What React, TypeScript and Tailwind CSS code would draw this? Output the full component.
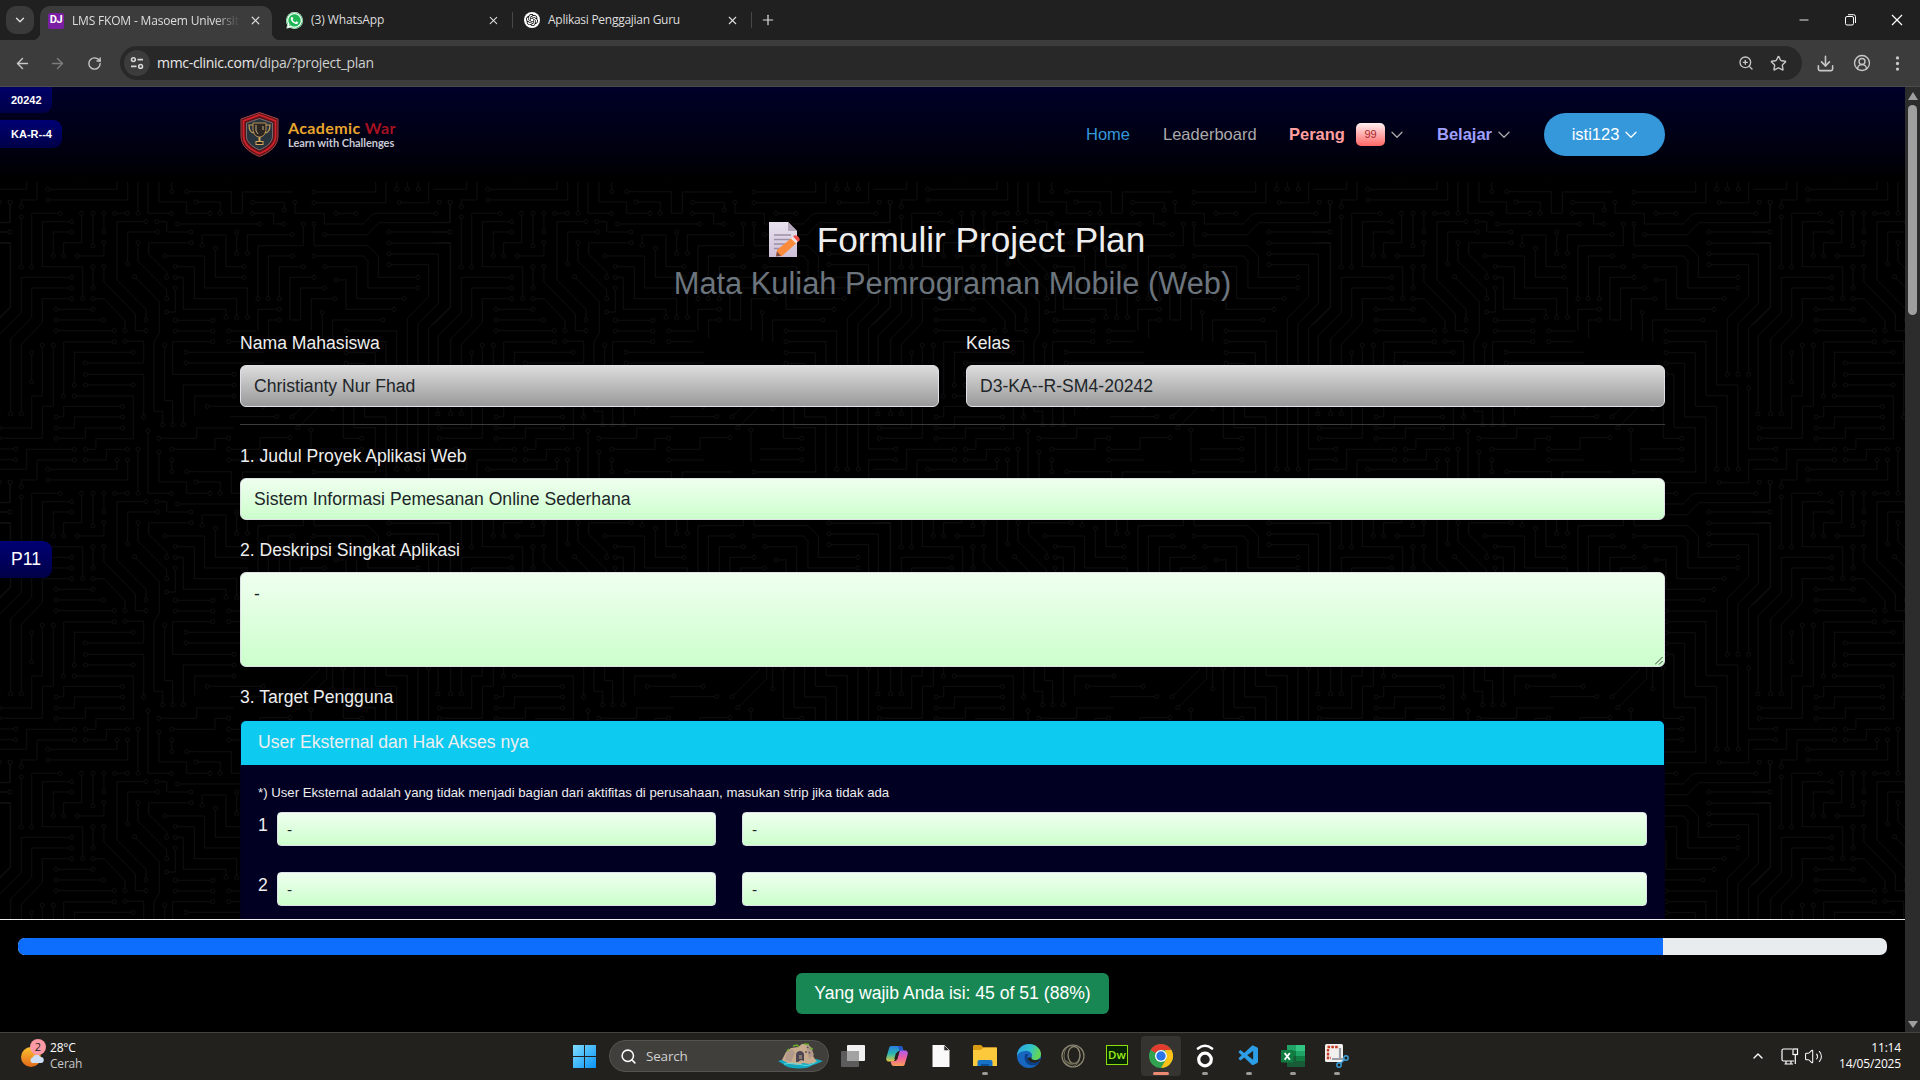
import React from "react";
import {
  ArrowLeft, ArrowRight, ChevronDown, ChevronUp, CircleUserRound, Download, EllipsisVertical,
  Minus, Plus, RotateCw, Search, Star, Volume2, X, ZoomIn,
} from "lucide-react";
import { FaWhatsapp } from "react-icons/fa";
import { SiOpenai } from "react-icons/si";
import { VscVscode } from "react-icons/vsc";

const UI = "font-['Open_Sans','Noto_Sans',sans-serif]";

/* Circuit-board traces; an "o" before or after a trace marks a solder pad. */
const TRACES = [
  "-20,22 80,22 80,0", "o64,74 64,54 111,54 111,0", "o30,61 30,121 -20,121", "o30,150 -20,150",
  "-20,182 32,182 32,376 -20,428", "o143,22 351,22 351,0", "o143,54 383,54 383,0",
  "o181,94 95,94 95,255o", "o64,104 64,255o", "o215,119 127,119 127,254 248,254 248,350o",
  "o215,150 160,150 160,222o", "o245,94 245,182 191,182 191,222o", "o279,94 279,192o",
  "o312,94 312,150o", "o312,182 312,222 232,222o", "o344,94 382,94o", "o414,94 414,0",
  "444,0 444,94 515,94o", "477,0 477,60 560,60 560,94 630,94o", "o515,29 515,0",
  "o560,29 694,29 694,94 727,94 727,30 880,30", "o588,60 661,60 661,94o",
  "o438,119 351,119 351,294 438,382 438,414o", "o470,119 500,119 500,150 572,150o",
  "o533,126 780,126o", "o472,150 383,150 383,246o", "o414,182 414,237 500,324 500,350o",
  "o574,182 446,182 446,216 500,270 500,286o",
  "o404,284 478,359 478,454 462,479 462,688 488,688 488,728o",
  "o606,190 606,159 678,159 678,254 732,254o", "o646,199 646,286 732,286o", "o710,150 710,214o",
  "o494,222 614,222 614,318 742,318 742,406o", "o526,254 583,254 583,350 710,350 710,406o",
  "o526,286 550,286 550,382 678,382 678,406o", "o526,318 526,390 500,390o", "o279,254 279,318o",
  "o312,254 312,300 406,396 406,446 438,446o", "o279,350 312,350 375,416 375,446o",
  "o215,286 64,286 64,391 -6,462 -6,696o", "o215,318 95,318 95,407 32,470 32,696o",
  "o215,350 127,350 127,422 64,486 64,696o", "o168,382 279,382o", "o168,414 311,414o",
  "o168,446 343,446o", "o343,480 191,480 191,642o", "o375,478 431,478 431,543 256,543o",
  "o399,511 223,511 223,609o", "o256,577 431,577 431,705o", "o256,609 399,609o",
  "o223,642 400,642 400,770 288,770 288,802 256,802o", "o368,673 191,673 191,705 168,705o",
  "o368,705 223,705 223,738 168,738o", "o368,738 256,738 256,769 168,769o",
  "o127,489 127,642 95,642 95,738 -2,738o", "o160,489 160,673 127,673 127,769 -2,769o",
  "o95,512 95,600o", "o223,802 80,802 80,840", "o223,834 111,834 111,840",
  "o256,834 319,834 319,802 382,802o", "o351,834 351,840", "o382,834 383,840",
  "o414,802 414,840", "o444,746 444,840", "o477,769 590,769 590,738 700,738", "o477,809 477,840",
  "o515,802 645,802 645,769 686,769o", "o515,834 515,840", "o494,489 494,656 518,656 518,728o",
  "o702,609 550,609 550,728o", "o702,642 584,642 584,700", "o622,673 790,673o",
  "o526,415 638,415o", "o526,447 638,447o", "o638,479 518,479 518,577 702,577o",
  "o686,447 766,447", "o686,479 760,479", "o558,511 790,511", "o558,543 790,543",
  "o686,834 790,834", "o758,61 853,61 853,84o", "o757,94 821,94 821,126 852,126o",
  "o885,61 885,94 973,94 973,126 1090,126 1120,94 1308,94o", "o942,30 1127,30 1127,0",
  "o942,62 1158,62 1158,0", "o1008,94 1068,94o", "o1190,21 1190,0", "o1222,21 1222,0",
  "o1255,21 1254,0", "o1198,62 1286,62 1286,0", "o1318,61 1318,61",
  "o1351,61 1351,122 1135,122 1102,158 973,158o", "o1166,150 1350,150o",
  "o1167,184 1351,184 1351,374 1286,439 1286,577o", "o1167,216 1315,216 1315,364 1254,425 1254,577o",
  "o1167,248 1286,248 1286,343 1222,409 1222,577o", "o877,158 742,158 742,214o",
  "o910,126 910,191 774,191 774,350o", "o877,222 805,222 805,350o", "o910,254 838,254 838,350o",
  "o942,126 942,191 1105,191 1135,222 1135,286 1254,286o",
  "o942,222 1090,222 1104,238 1104,318 1254,318o", "o975,254 1070,254 1070,350 1213,350o",
  "o1008,294 1038,294 1038,382 1182,382o", "o942,286 870,286 870,414 902,414 902,318 973,318o",
  "o1005,350 934,350 934,446", "o967,391 967,480", "o838,382 774,382 774,446",
  "o838,414 806,414 806,470", "o1149,414 998,414 998,480",
  "o1038,447 1190,447 1190,609 1254,609 1254,840", "o1038,479 1158,479 1158,641 1222,641 1222,840",
  "o1038,512 1126,512 1126,673 1190,673 1190,840", "o1038,544 1094,544 1094,705 1158,705 1158,840",
  "o1038,577 1062,577 1062,737 1126,737 1126,840", "o1030,619 1030,769 1085,769o",
  "960,801 1085,801o", "960,833 1085,833o", "o1286,619 1286,801 1367,801o",
  "o1367,833 1286,833 1286,840", "o830,704 690,704", "o877,704 960,621", "o893,737 980,650 980,600",
  "o933,744 933,840", "o870,767 780,767 780,802 686,802o", "o998,680 998,560",
];

const SHIFTS = [[0, 0], [-1320, 0], [1320, 0], [0, -840]];

function Circuit() {
  return (
    <svg className="absolute inset-0 h-full w-full" aria-hidden="true">
      <defs>
        <pattern id="board" width="440" height="280" patternUnits="userSpaceOnUse">
          {SHIFTS.map(([sx, sy]) => (
            <g key={`${sx} ${sy}`} transform={`scale(.33333) translate(${sx} ${sy})`} fill="none" stroke="#0e0e0e" strokeWidth="3">
              {TRACES.map((t) => {
                const pts = t.replace(/o/g, "");
                const list = pts.split(" ").map((p) => p.split(","));
                const a = list[0];
                const b = list[list.length - 1];
                return (
                  <g key={t}>
                    <polyline points={pts} />
                    {t.startsWith("o") && <circle cx={a[0]} cy={a[1]} r="6" fill="#000" />}
                    {t.endsWith("o") && <circle cx={b[0]} cy={b[1]} r="6" fill="#000" />}
                  </g>
                );
              })}
            </g>
          ))}
        </pattern>
      </defs>
      <rect width="100%" height="100%" fill="url(#board)" />
    </svg>
  );
}

function TabStrip() {
  return (
    <div className="flex h-10 shrink-0 items-center bg-[#202020] pl-1.5 text-[12px] text-[#dedede]">
      <div className="mb-0 flex h-7 w-7 items-center justify-center rounded-[10px] bg-[#3a3a3a]">
        <ChevronDown size={14} strokeWidth={2.4} />
      </div>
      <div className="relative ml-1.5 flex h-[34px] w-[232px] items-center self-end rounded-t-[10px] bg-[#3c3c3c] pb-[5px] pl-2">
        <span className="absolute -left-2 bottom-0 h-2 w-2 bg-[radial-gradient(circle_at_0_0,#202020_8px,#3c3c3c_8.5px)]" />
        <span className="absolute -right-2 bottom-0 h-2 w-2 bg-[radial-gradient(circle_at_100%_0,#202020_8px,#3c3c3c_8.5px)]" />
        <span className="flex h-4 w-4 items-center justify-center rounded-[2px] bg-[#7b1fa2] font-['Roboto',sans-serif] text-[11px] font-bold tracking-[-0.3px] text-white">DJ</span>
        <span className="ml-2 w-[168px] overflow-hidden whitespace-nowrap tracking-[-0.18px] [mask-image:linear-gradient(90deg,#000_85%,transparent)]">LMS FKOM - Masoem University</span>
        <X className="ml-[9px]" size={13} strokeWidth={2.2} />
      </div>
      <div className="flex h-full w-[241px] items-center pl-[14px]">
        <span className="flex h-[17px] w-[17px] items-center justify-center rounded-full bg-white text-[#1fb954]">
          <svg viewBox="0 0 18 18" className="h-[17px] w-[17px]"><circle cx="9" cy="9" r="8.6" fill="#20b857" /><path d="M0.8 17.2 2.2 12 6 15.8z" fill="#20b857" stroke="#fff" strokeWidth=".6" /></svg>
          <FaWhatsapp size={17} className="absolute text-white" />
        </span>
        <span className="ml-[8px] w-[175px] tracking-[-0.1px]">(3) WhatsApp</span>
        <X size={13} strokeWidth={2} className="ml-[2px]" />
        <span className="ml-[12px] h-4 w-px bg-[#474747]" />
      </div>
      <div className="flex h-full items-center pl-[11px]">
        <span className="flex h-4 w-4 items-center justify-center rounded-full bg-white text-black"><SiOpenai size={12} /></span>
        <span className="ml-2 w-[178px] tracking-[-0.27px]">Aplikasi Penggajian Guru</span>
        <X size={13} strokeWidth={2} />
        <span className="ml-[12px] h-4 w-px bg-[#474747]" />
        <Plus size={16} strokeWidth={1.8} className="ml-[8px]" />
      </div>
      <div className="ml-auto flex items-center gap-[34px] pr-[17px] text-white">
        <Minus size={14} strokeWidth={1.5} />
        <svg width="12" height="12" viewBox="0 0 12 12" fill="none" stroke="currentColor"><rect x=".5" y="2.5" width="8" height="8.5" rx="1.5" /><path d="M3 .7h5.5a2 2 0 0 1 2 2V9" /></svg>
        <svg width="12" height="12" viewBox="0 0 12 12" fill="none" stroke="currentColor" strokeWidth="1.2"><path d="m1 1 10 10M11 1 1 11" /></svg>
      </div>
    </div>
  );
}

function Toolbar() {
  return (
    <div className="flex h-[47px] shrink-0 items-center border-b border-[#4b4b4b] bg-[#3c3c3c] pl-[14px] text-[#c7c7c7]">
      <ArrowLeft size={17} strokeWidth={2} />
      <ArrowRight size={17} strokeWidth={2} className="ml-[18px] text-[#7d7d7d]" />
      <RotateCw size={15} strokeWidth={2.2} className="ml-[21px]" />
      <div className="ml-[18px] flex h-[34px] w-[1682px] items-center rounded-full bg-[#282828] pl-[4px]">
        <span className="flex h-[26px] w-[26px] items-center justify-center rounded-full bg-[#3c3c3c]">
          <svg width="14" height="14" viewBox="0 0 14 14" fill="none" stroke="#d5d5d5" strokeWidth="1.6"><circle cx="3.4" cy="3.6" r="1.9" /><path d="M7.5 3.6H13M1 10.4h5.5" /><circle cx="10.6" cy="10.4" r="1.9" /></svg>
        </span>
        <span className="ml-[7px] mt-[-1px] text-[14px] tracking-[-0.3px] text-[#e8e8e8]">mmc-clinic.com<span className="text-[#cfcfcf]">/dipa/?project_plan</span></span>
        <ZoomIn size={16} strokeWidth={2} className="ml-auto" />
        <Star size={17} strokeWidth={2} className="ml-4 mr-[15px]" />
      </div>
      <Download size={19} strokeWidth={2} className="ml-[14px]" />
      <CircleUserRound size={18} strokeWidth={1.8} className="ml-[18px]" />
      <EllipsisVertical size={19} strokeWidth={2.2} className="ml-[17px]" />
    </div>
  );
}

function Shield() {
  return (
    <svg width="39" height="45" viewBox="0 0 39 45">
      <path d="M19.5.5 38 7v17c0 9-7 16-18.500 20.500C8 40 1 33 1 24V7z" fill="#5c1418" stroke="#a54743" strokeWidth="1" />
      <path d="M19.500 3 35.500 8.800V24c0 7.500-6 13.500-16 17.500C9.500 37.500 3.500 31.500 3.500 24V8.800z" fill="none" stroke="#d2202a" strokeWidth="1.800" />
      <path d="M19.500 6.500 32.500 11v13c0 6-5 10.500-13 14-8-3.500-13-8-13-14V11z" fill="#27343d" stroke="#8d8d8d" strokeWidth=".7" />
      <path d="M13 11h13v6c0 5-3 8-6.500 8S13 22 13 17z" fill="#2b2622" stroke="#b98f55" strokeWidth="1" />
      <path d="M13 13H9c0 5 2 8 5.500 8M26 13h4c0 5-2 8-5.500 8" fill="none" stroke="#c59a5a" strokeWidth="1.200" />
      <path d="M16 13v6l2 3M23 14v4" fill="none" stroke="#e5cf9b" strokeWidth=".8" />
      <path d="M18.500 25h2v4h3v4h-8v-4h3z" fill="#d4a55e" />
      <path d="M16.500 30h6v2h-6z" fill="#2a211b" />
    </svg>
  );
}

const Caret = ({ color }: { color: string }) => (
  <svg width="12" height="8" viewBox="0 0 12 8" fill="none" stroke={color} strokeWidth="1.3" strokeLinecap="round" strokeLinejoin="round"><path d="m1 1.300 5 5 5-5" /></svg>
);

function Header() {
  return (
    <header className="relative flex h-[95px] shrink-0 items-center bg-[linear-gradient(#000029,#000010_65%,#000)] pl-[240px] text-[16.5px]">
      <Shield />
      <div className="ml-[9px] mt-[-1px]">
        <div className="font-['Lato',sans-serif] text-[16px] font-bold leading-[17px] tracking-[0.38px] text-[#e9a52c]">Academic <span className="text-[#a5121f]">War</span></div>
        <div className="font-['Lato',sans-serif] text-[11px] font-bold leading-[14px] tracking-[-0.05px] text-[#c9c9d2]">Learn with Challenges</div>
      </div>
      <nav className="ml-auto flex h-[43px] items-center pr-[240px]">
        <a className="w-[77px] text-[#3498db]">Home</a>
        <a className="w-[126px] text-[#aaaaaa]">Leaderboard</a>
        <a className="w-[67px] font-bold text-[#ff9f9f]">Perang</a>
        <span className="flex h-[23px] w-[29px] items-center justify-center rounded-[5px] bg-[linear-gradient(#fff0f0,#ff6666)] text-[11px] text-[#a52a2a]">99</span>
        <span className="ml-[6px] w-[46px]"><Caret color="#aaa" /></span>
        <a className="w-[61px] font-bold text-[#9f9fff]">Belajar</a>
        <span className="w-[46px]"><Caret color="#aaa" /></span>
        <span className="flex h-[43px] w-[121px] items-center justify-center gap-[6px] rounded-full bg-[#3498db] text-white">isti123 <Caret color="#fff" /></span>
      </nav>
      <div className="absolute left-0 top-0 flex h-[26px] w-[52px] items-center rounded-br-[9px] bg-[linear-gradient(#000068,#000048)] pl-[11px] text-[11px] font-bold text-white">20242</div>
      <div className="absolute left-0 top-[33px] flex h-[28px] w-[62px] items-center rounded-r-[9px] bg-[linear-gradient(#000074,#000048)] pl-[11px] pt-[1px] text-[11px] font-bold text-white">KA-R--4</div>
    </header>
  );
}

const Memo = () => (
  <svg width="32" height="36" viewBox="0 0 32 36">
    <defs><linearGradient id="paper" x2="0" y2="1"><stop stopColor="#e9e2ee" /><stop offset="1" stopColor="#cdbfd8" /></linearGradient></defs>
    <path d="M0 0h19l9 9v26H0z" fill="url(#paper)" />
    <path d="M19 0v9h9z" fill="#b3a6bd" />
    <path d="M5 13h17M5 17.500h16M5 22h13M5 26.500h8" stroke="#9b8fa6" strokeWidth="1.400" />
    <path d="m7 34 1-6L22.500 16l5 5L13 34z" fill="#fb8b3c" />
    <path d="m22 16.500 2-2 5 5-2 2z" fill="#f3e6ea" />
    <path d="m24 14.500 1.500-1c2-1 6 2.500 5 5L29 19.800z" fill="#f2504b" />
    <path d="m7 34.500 1-5 4 4.500z" fill="#7a4a42" />
  </svg>
);

const GREEN = "bg-[linear-gradient(#efffef,#ccffcc)]";

function Field({ value, gray }: { value: string; gray?: boolean }) {
  return (
    <div className={`flex h-[42px] items-center rounded-[6px] border border-[#dee2e6] px-[13px] text-[#212529] ${gray ? "bg-[linear-gradient(#dddddd,#999999)]" : GREEN}`}>{value}</div>
  );
}

function SmallField({ wide }: { wide?: boolean }) {
  return (
    <div className={`flex h-[34px] items-center rounded-[4px] border border-[#dee2e6] pl-[9px] pt-[1px] text-[15.4px] text-[#212529] ${GREEN} ${wide ? "ml-[26px] w-[905px]" : "w-[439px]"}`}>-</div>
  );
}

const Label = ({ children, className }: { children: React.ReactNode; className: string }) => (
  <div className={`h-[27px] leading-[27px] ${className}`}>{children}</div>
);

function Form() {
  return (
    <main className="relative min-h-0 flex-1 overflow-hidden bg-black">
      <Circuit />
      <div className="relative px-[240px] pt-[36px] text-[17.6px] text-[#eeeeee]">
        <h2 className="flex h-[43px] items-center justify-center pl-[9px] text-[35.2px] leading-[43px]"><Memo /><span className="ml-[16px]">Formulir Project Plan</span></h2>
        <h3 className="mt-px h-[40px] text-center text-[30.8px] leading-[43px] text-[#6c757d]">Mata Kuliah Pemrograman Mobile (Web)</h3>
        <div className="mt-[28px] grid grid-cols-2 gap-[27px]">
          <div><Label className="mb-[8px]">Nama Mahasiswa</Label><Field gray value="Christianty Nur Fhad" /></div>
          <div><Label className="mb-[8px]">Kelas</Label><Field gray value="D3-KA--R-SM4-20242" /></div>
        </div>
        <div className="mt-[17px] h-px bg-[#3c3c3c]" />
        <Label className="mb-[8px] mt-[18px]">1. Judul Proyek Aplikasi Web</Label>
        <Field value="Sistem Informasi Pemesanan Online Sederhana" />
        <Label className="mb-[8px] mt-[17px]">2. Deskripsi Singkat Aplikasi</Label>
        <div className={`relative h-[95px] rounded-[6px] border border-[#dee2e6] px-[13px] pt-[8px] text-[#212529] ${GREEN}`}>
          -
          <svg className="absolute bottom-px right-px" width="8" height="8" stroke="#444" strokeWidth="1"><path d="M0 7.500 7.500 0M4 7.500 7.500 4" /></svg>
        </div>
        <Label className="mb-[9px] mt-[17px]">3. Target Pengguna</Label>
        <section className="h-[300px] rounded-t-[6px] border border-[#00001c] bg-[#010022]">
          <div className="h-[44px] rounded-t-[5px] bg-[#0dcaf0] pl-[17px] leading-[42px]">User Eksternal dan Hak Akses nya</div>
          <div className="pl-[17px] pt-[18px]">
            <p className="mb-[9px] h-5 text-[13.2px] leading-5">*) User Eksternal adalah yang tidak menjadi bagian dari aktifitas di perusahaan, masukan strip jika tidak ada</p>
            {[1, 2].map((n) => (
              <div key={n} className="mb-[26px] flex items-start">
                <span className="w-[19px] leading-[27px]">{n}</span>
                <SmallField />
                <SmallField wide />
              </div>
            ))}
          </div>
        </section>
      </div>
      <div className="absolute left-0 top-[359px] flex h-[37px] w-[52px] items-center rounded-r-[9px] bg-[linear-gradient(#000074,#000048)] pl-[11px] text-[17.6px] text-white">P11</div>
    </main>
  );
}

function ProgressFooter() {
  return (
    <footer className="flex h-[113px] shrink-0 flex-col items-center border-t border-[#eeeeee] bg-black px-[18px] pt-[18px]">
      <div className="h-[17px] w-full overflow-hidden rounded-[7px] bg-[#e9ecef]">
        <div className="h-full bg-[#0d6efd]" style={{ width: "88%" }} />
      </div>
      <div className="mt-[18px] flex h-[41px] w-[313px] items-center justify-center rounded-[6px] bg-[#198754] text-[17.6px] text-white">Yang wajib Anda isi: 45 of 51 (88%)</div>
    </footer>
  );
}

function Scrollbar() {
  return (
    <div className="flex w-[15px] shrink-0 flex-col items-center justify-between bg-[#2c2c2c] pb-[4px] pt-[5px]">
      <div className="flex flex-col items-center gap-[5px]">
        <svg width="10" height="8"><path d="M5 0 10 8H0z" fill="#9f9f9f" /></svg>
        <div className="h-[210px] w-[9px] rounded-full bg-[#9f9f9f]" />
      </div>
      <svg width="10" height="7"><path d="M0 0h10L5 7z" fill="#9f9f9f" /></svg>
    </div>
  );
}

/* Taskbar icons */
const TaskView = () => (
  <svg width="24" height="22" viewBox="0 0 24 22"><rect x="6" width="18" height="16" rx="1" fill="#f1f1f1" /><rect y="6" width="18" height="16" rx="1" fill="#5c5c5c" /><rect x="6" y="6" width="12" height="10" fill="#a3a3a3" /></svg>
);
const Copilot = () => (
  <svg width="24" height="22" viewBox="0 0 24 22">
    <defs>
      <linearGradient id="cp1" x2="0" y2="1"><stop stopColor="#2a7de0" /><stop offset=".5" stopColor="#29b8b0" /><stop offset="1" stopColor="#e6c93a" /></linearGradient>
      <linearGradient id="cp2" x2="0" y2="1"><stop stopColor="#b05bf0" /><stop offset=".5" stopColor="#f0609a" /><stop offset="1" stopColor="#f7a05a" /></linearGradient>
    </defs>
    <path d="M6 1h9c2 0 2.500 1 3 3l.5 2h-4c-2 0-2.500 1-3 3l-1.500 5c-.6 2-1.500 2.500-3 2.500H4C1 16.500.8 14 1.500 12L4 3.500C4.500 1.700 5 1 6 1z" fill="url(#cp1)" />
    <path d="M13 1h2c2 0 2.500 1 3 3l.5 2h-4z" fill="#2456c8" />
    <path d="M18 21H9c-2 0-2.500-1-3-3l-.5-2h4c2 0 2.500-1 3-3L14 8c.6-2 1.500-2.500 3-2.500h3c3 0 3.200 2.500 2.500 4.500L20 18.500c-.5 1.800-1 2.500-2 2.500z" fill="url(#cp2)" />
    <path d="M11 8h3l-1.700 6H9.300z" fill="#24221f" />
  </svg>
);
const FileIcon = () => (
  <svg width="18" height="22" viewBox="0 0 18 22"><path d="M.5 0H12l5.500 5.500V22H.5z" fill="#fafafa" /><path d="M12 0v5.500h5.500z" fill="#2a2a2a" stroke="#ddd" strokeWidth=".7" /></svg>
);
const Folder = () => (
  <svg width="24" height="22" viewBox="0 0 24 22"><path d="M0 1.500C0 .7.500 0 1.500 0H8l2.500 2.500H24V6H0z" fill="#d99a14" /><path d="M0 5h8l2.500-2.500H23q1 0 1 1V21H0z" fill="#fcc83c" /><path d="M4.500 21v-4q0-2 2-2h11q2 0 2 2v4z" fill="#1572c6" /><path d="M8 19h8v2H8z" fill="#0b4f96" /></svg>
);
const Edge = () => (
  <svg width="24" height="24" viewBox="0 0 24 24">
    <defs><linearGradient id="eg" x2="1" y2=".3"><stop stopColor="#2a9fe8" /><stop offset=".6" stopColor="#31c3c8" /><stop offset="1" stopColor="#64d655" /></linearGradient></defs>
    <circle cx="12" cy="12" r="12" fill="#1767c0" />
    <path d="M0 12C0 5 5 0 12 0s12 5 12 10c0 4-3 6-6 6-4 0-4-2-3.500-3 .8-1 .8-2 0-3.500C13 7.500 11 6.500 8 7 4 7.500 1 9 0 12z" fill="url(#eg)" />
    <path d="M8.500 10C6 15 9 21 15 21.500c3 .2 5.500-1 7-3 .5-1 .5-1.500-.5-1C16 20 11 17.500 10.500 14c-.2-1.500.2-3 1.500-4z" fill="#0c3f86" />
    <path d="M10.500 14c.5 3 4 5.500 8.500 4.500 1.500-.4 2.500-1 3.500-1.500l1-2-5 1.200c-4 0-4.500-2-4-3.200z" fill="#24241f" />
  </svg>
);
const Ring = () => (
  <svg width="24" height="24" viewBox="0 0 24 24" fill="none" stroke="#8c8872"><circle cx="12" cy="12" r="11" strokeWidth="1.200" /><ellipse cx="13" cy="11" rx="6" ry="8.500" strokeWidth="1.300" /><ellipse cx="11" cy="12" rx="8" ry="10.500" strokeWidth=".7" /><path d="M3 14c3 4 7 6 12 5-3 3-9 3-12-5z" fill="#6b6750" stroke="none" /></svg>
);
const Dreamweaver = () => (
  <div className="mb-[3px] flex h-5 w-[22px] items-center justify-center border-[1.5px] border-[#8ede0d] bg-[#072401] text-[11.500px] font-semibold text-[#9bee1a]">Dw</div>
);
const Chrome = () => (
  <svg width="24" height="24" viewBox="0 0 24 24">
    <circle cx="12" cy="12" r="12" fill="#31a350" />
    <path d="M12 0a12 12 0 0 1 10.400 6H12a6 6 0 0 0-5.200 3L1.600 6A12 12 0 0 1 12 0z" fill="#e33b2e" />
    <path d="M22.400 6A12 12 0 0 1 12 24l5.200-9A6 6 0 0 0 17.200 9L16 6z" fill="#fbc116" />
    <circle cx="12" cy="12" r="6" fill="#fff" /><circle cx="12" cy="12" r="4.700" fill="#2b74e8" />
  </svg>
);
const Ubuntu = () => (
  <svg width="20" height="24" viewBox="0 0 20 24" fill="none" stroke="#fff" strokeLinecap="round"><circle cx="10" cy="15.500" r="6.300" strokeWidth="3.200" /><path d="M3 4.500c4.500-3.500 9.500-3.500 14 0" strokeWidth="2.600" /></svg>
);
const Excel = () => (
  <svg width="24" height="22" viewBox="0 0 24 22"><rect x="6" width="18" height="22" rx="1.500" fill="#21a366" /><path d="M6 0h9v6H6z" fill="#21a366" /><path d="M15 0h9v6h-9z" fill="#33c481" /><path d="M6 6h9v5H6z" fill="#107c41" /><path d="M6 11h18v11H6z" fill="#185c37" /><path d="M15 11h9v5h-9z" fill="#107c41" /><rect y="5" width="12.500" height="12.500" rx="1" fill="#107c41" /><path d="m3.600 8 5.300 6.800M8.900 8l-5.300 6.800" stroke="#fff" strokeWidth="1.800" /></svg>
);
const Snip = () => (
  <svg width="24" height="24" viewBox="0 0 24 24"><rect width="18" height="18" rx="1.500" fill="#f2f0ef" /><path d="M2.500 3H14" fill="none" stroke="#c23b22" strokeWidth="2.400" strokeDasharray="2.600 1.200" /><path d="M3 5v9h3" fill="none" stroke="#c23b22" strokeWidth="2.400" strokeDasharray="2.600 1.200" /><path d="M15 4v12M7 15h12" stroke="#9a9da3" strokeWidth="2.200" /><circle cx="21" cy="14" r="2.200" fill="none" stroke="#3aa0dc" strokeWidth="1.400" /><circle cx="14" cy="21" r="2.200" fill="none" stroke="#3aa0dc" strokeWidth="1.400" /><path d="m15.500 19.500 4-4" stroke="#3aa0dc" strokeWidth="1.400" /></svg>
);
const Cave = () => (
  <svg width="45" height="26" viewBox="0 0 45 26">
    <path d="M0 18q8-3 14-1t14-1q10-1 17 2-6 3-10 4-6 4-15 3.500Q8 25 5 21z" fill="#12a8c0" />
    <path d="M4 17 8 9l5-4 7-1 4-3 6 0 3 4 2 8 4 6-8 2-6-1-5 2-8-1z" fill="#c9ab8e" />
    <path d="M9 9l5-3 3 4-4 9-6-2zM28 1l5 3 3 8-5 4z" fill="#b3998a" />
    <path d="M18 19v-8q1-3 4-3t4 3v7l-3-1-3 2z" fill="#4b4652" /><path d="M21 12h3v4h-3z" fill="#8a7a72" />
    <path d="m29 4 1.500 1M31 9l1 1.500M28 8v2" stroke="#55495a" strokeWidth="1.300" />
    <path d="m15 3 4-1 2 2M26 1l5 .5M32 5l3 1M9 8l2-2" stroke="#6fae2e" strokeWidth="1.500" fill="none" />
    <path d="M6 21q8-2 16 .5t15-2" stroke="#67dbe0" fill="none" />
  </svg>
);

const APPS: { key: string; icon: React.ReactNode; run?: boolean; active?: boolean }[] = [
  { key: "taskview", icon: <TaskView /> },
  { key: "copilot", icon: <Copilot /> },
  { key: "file", icon: <FileIcon /> },
  { key: "explorer", icon: <Folder />, run: true },
  { key: "edge", icon: <Edge /> },
  { key: "ring", icon: <Ring /> },
  { key: "dw", icon: <Dreamweaver /> },
  { key: "chrome", icon: <Chrome />, active: true },
  { key: "ubuntu", icon: <Ubuntu />, run: true },
  { key: "code", icon: <VscVscode size={24} color="#2c9ee6" />, run: true },
  { key: "excel", icon: <Excel />, run: true },
  { key: "snip", icon: <Snip />, run: true },
];

function Taskbar() {
  return (
    <div className="flex h-12 shrink-0 items-center border-t border-[#444341] bg-[#23211e] pb-px text-[12px] text-white">
      <div className="flex w-[573px] items-center pl-[20px]">
        <svg className="-mt-[7px]" width="26" height="30" viewBox="0 0 26 30">
          <defs><linearGradient id="sun" x2="0" y2="1"><stop stopColor="#f9c22e" /><stop offset="1" stopColor="#e3691c" /></linearGradient></defs>
          <circle cx="11" cy="19" r="10" fill="url(#sun)" />
          <path d="M12 25a3 3 0 0 1 .5-5.500 4.500 4.500 0 0 1 8-.5 3 3 0 0 1 .5 6z" fill="#cfdff6" />
          <circle cx="18" cy="9" r="8" fill="#ff99a4" />
          <text x="18" y="13" textAnchor="middle" fontSize="11" fill="#222" fontFamily="Open Sans">2</text>
        </svg>
        <div className="ml-[4px] leading-4 tracking-[-0.2px]"><div>28°C</div><div className="text-[#c8c8c8]">Cerah</div></div>
      </div>
      <svg width="23" height="23" viewBox="0 0 23 23"><defs><linearGradient id="win" x2="1" y2="1"><stop stopColor="#7fdcff" /><stop offset="1" stopColor="#0a93f5" /></linearGradient></defs><path d="M0 0h11v11H0zM12 0h11v11H12zM0 12h11v11H0zM12 12h11v11H12z" fill="url(#win)" /></svg>
      <div className="ml-[13px] flex h-8 w-[220px] items-center rounded-full border border-[#54534f] bg-[#403f3b] pl-[10px] pr-[5px]">
        <Search size={17} strokeWidth={2.2} />
        <span className="ml-[9px] text-[13.500px] tracking-[-0.2px] text-[#d0d0d0]">Search</span>
        <span className="ml-auto"><Cave /></span>
      </div>
      <div className="ml-[2px] flex items-center">
        {APPS.map((a) => (
          <div key={a.key} className="flex h-[46px] w-11 items-center justify-center">
            <div className={`relative flex h-10 w-10 items-center justify-center rounded-[4px] ${a.active ? "bg-[#353431]" : ""}`}>
              {a.icon}
              {a.run && <span className="absolute bottom-[1px] h-[3px] w-1.5 rounded-full bg-[#9b9a97]" />}
              {a.active && <span className="absolute bottom-[1px] h-[3px] w-4 rounded-full bg-[#ee8a74]" />}
            </div>
          </div>
        ))}
      </div>
      <div className="ml-auto flex items-center pr-[19px]">
        <ChevronUp size={16} strokeWidth={2} />
        <svg className="ml-[15px]" width="18" height="17" viewBox="0 0 18 17" fill="none" stroke="currentColor" strokeWidth="1.200"><path d="M11 1H2.500Q1 1 1 2.500v9Q1 13 2.500 13H13M5 13v2.500M10 13v2.500M3.500 16H12" /><rect x="12" y="1" width="4.500" height="5.500" /><path d="M14.300 6.500V16" /></svg>
        <Volume2 size={19} strokeWidth={1.300} className="ml-[5px]" />
        <div className="ml-[12px] w-[66px] text-right leading-4 tracking-[-0.170px]"><div>11:14</div><div className="whitespace-nowrap">14/05/2025</div></div>
      </div>
    </div>
  );
}

export default function App() {
  return (
    <div className="flex h-[1080px] w-[1920px] flex-col overflow-hidden bg-black">
      <div className={`shrink-0 ${UI}`}><TabStrip /><Toolbar /></div>
      <div className="flex min-h-0 flex-1">
        <div className="flex min-w-0 flex-1 flex-col font-['Liberation_Sans',Arial,sans-serif]">
          <Header />
          <Form />
          <ProgressFooter />
        </div>
        <Scrollbar />
      </div>
      <div className={`shrink-0 ${UI}`}><Taskbar /></div>
    </div>
  );
}
